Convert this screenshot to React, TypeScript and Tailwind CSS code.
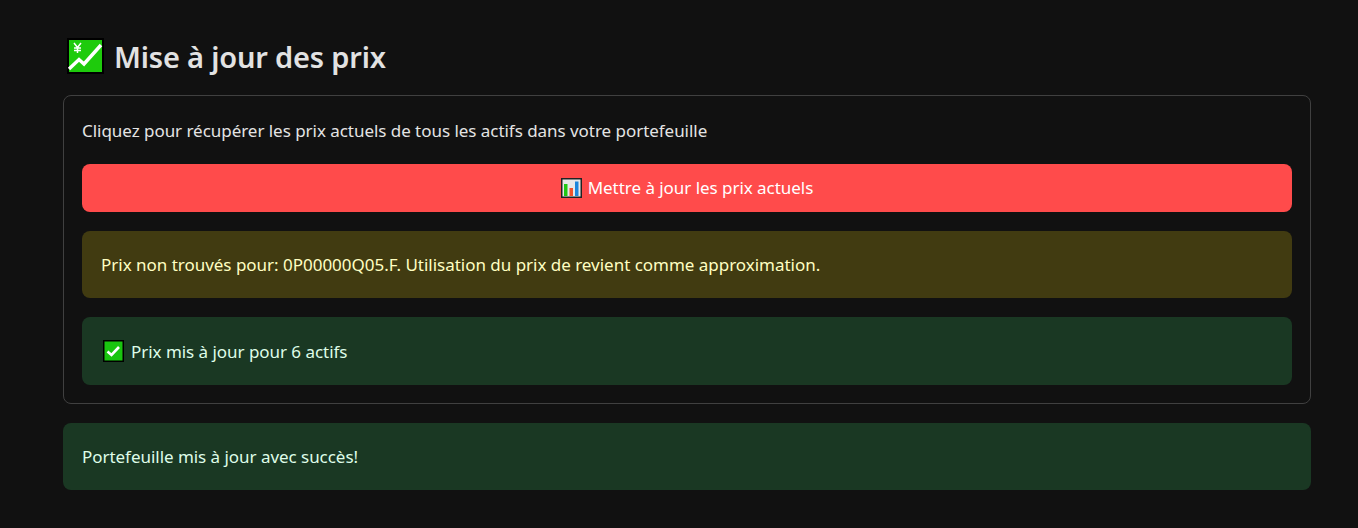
import React from 'react';

const ChartIcon = () => (
  <svg width="37" height="36" viewBox="0 0 37 36" className="shrink-0">
    <rect width="37" height="36" fill="#000" />
    <rect x="2" y="2" width="33" height="32" fill="#1ecb0c" />
    <path d="M2 31 L12 21.5 L17 26 L34 7" fill="none" stroke="#fff" strokeWidth="3.4" />
    <path d="M7 5 L10.5 9.5 L14 5 M10.5 9.5 V15 M7 10 H14 M7 12.5 H14" fill="none" stroke="#fff" strokeWidth="1.5" />
  </svg>
);

const BarsIcon = () => (
  <svg width="21" height="20" viewBox="0 0 21 20" className="shrink-0">
    <rect width="21" height="20" fill="#222" />
    <rect x="1.5" y="1.5" width="18" height="17" fill="#e8e8e8" />
    <rect x="3" y="6" width="3.5" height="12" fill="#22c814" />
    <rect x="8.5" y="10" width="3.5" height="8" fill="#f0522a" />
    <rect x="14" y="3.5" width="3.5" height="14.5" fill="#1c86dc" />
  </svg>
);

const CheckIcon = () => (
  <svg width="21" height="22" viewBox="0 0 21 22" className="shrink-0">
    <rect width="21" height="22" fill="#000" />
    <rect x="1.5" y="1.5" width="18" height="19" fill="#19c50f" />
    <path d="M4.5 11.5 L8.5 15 L16 7" fill="none" stroke="#fff" strokeWidth="2.6" />
  </svg>
);

export default function App() {
  return (
    <div className="h-[528px] bg-[#111111] pl-[63px] pr-[47px] pt-[38px] font-['Noto_Sans',sans-serif] text-[17px] tracking-[-0.04px] text-[#e4e4e4] overflow-hidden">
      <div className="flex items-center gap-[10px] h-[36px] mb-[21px] pl-[4px]">
        <ChartIcon />
        <h1 className="text-[29px] font-semibold leading-none text-[#e2e2e2] tracking-[-0.18px]">Mise à jour des prix</h1>
      </div>

      <div className="border border-[#404040] rounded-lg px-[18px] pt-[18px] pb-[18px] h-[309px]">
        <p className="leading-[34px] h-[34px]">Cliquez pour récupérer les prix actuels de tous les actifs dans votre portefeuille</p>

        <button className="mt-[16px] w-full h-[48px] bg-[#ff4b4b] rounded-lg text-white flex items-center justify-center gap-[6px]">
          <BarsIcon />
          <span>Mettre à jour les prix actuels</span>
        </button>

        <div className="mt-[19px] h-[67px] bg-[#413b11] rounded-lg px-[19px] flex items-center text-[#ffffc2] tracking-[-0.02px]">
          <span className="pt-[1px]">Prix non trouvés pour: 0P00000Q05.F. Utilisation du prix de revient comme approximation.</span>
        </div>

        <div className="mt-[19px] h-[68px] bg-[#1a3823] rounded-lg pl-[21px] flex items-center gap-[7px] text-[#dffde9]">
          <CheckIcon />
          <span className="pt-[2px]">Prix mis à jour pour 6 actifs</span>
        </div>
      </div>

      <div className="mt-[19px] h-[67px] bg-[#1a3823] rounded-lg px-[19px] flex items-center text-[#dffde9]">
        <span className="pt-[1px]">Portefeuille mis à jour avec succès!</span>
      </div>
    </div>
  );
}
